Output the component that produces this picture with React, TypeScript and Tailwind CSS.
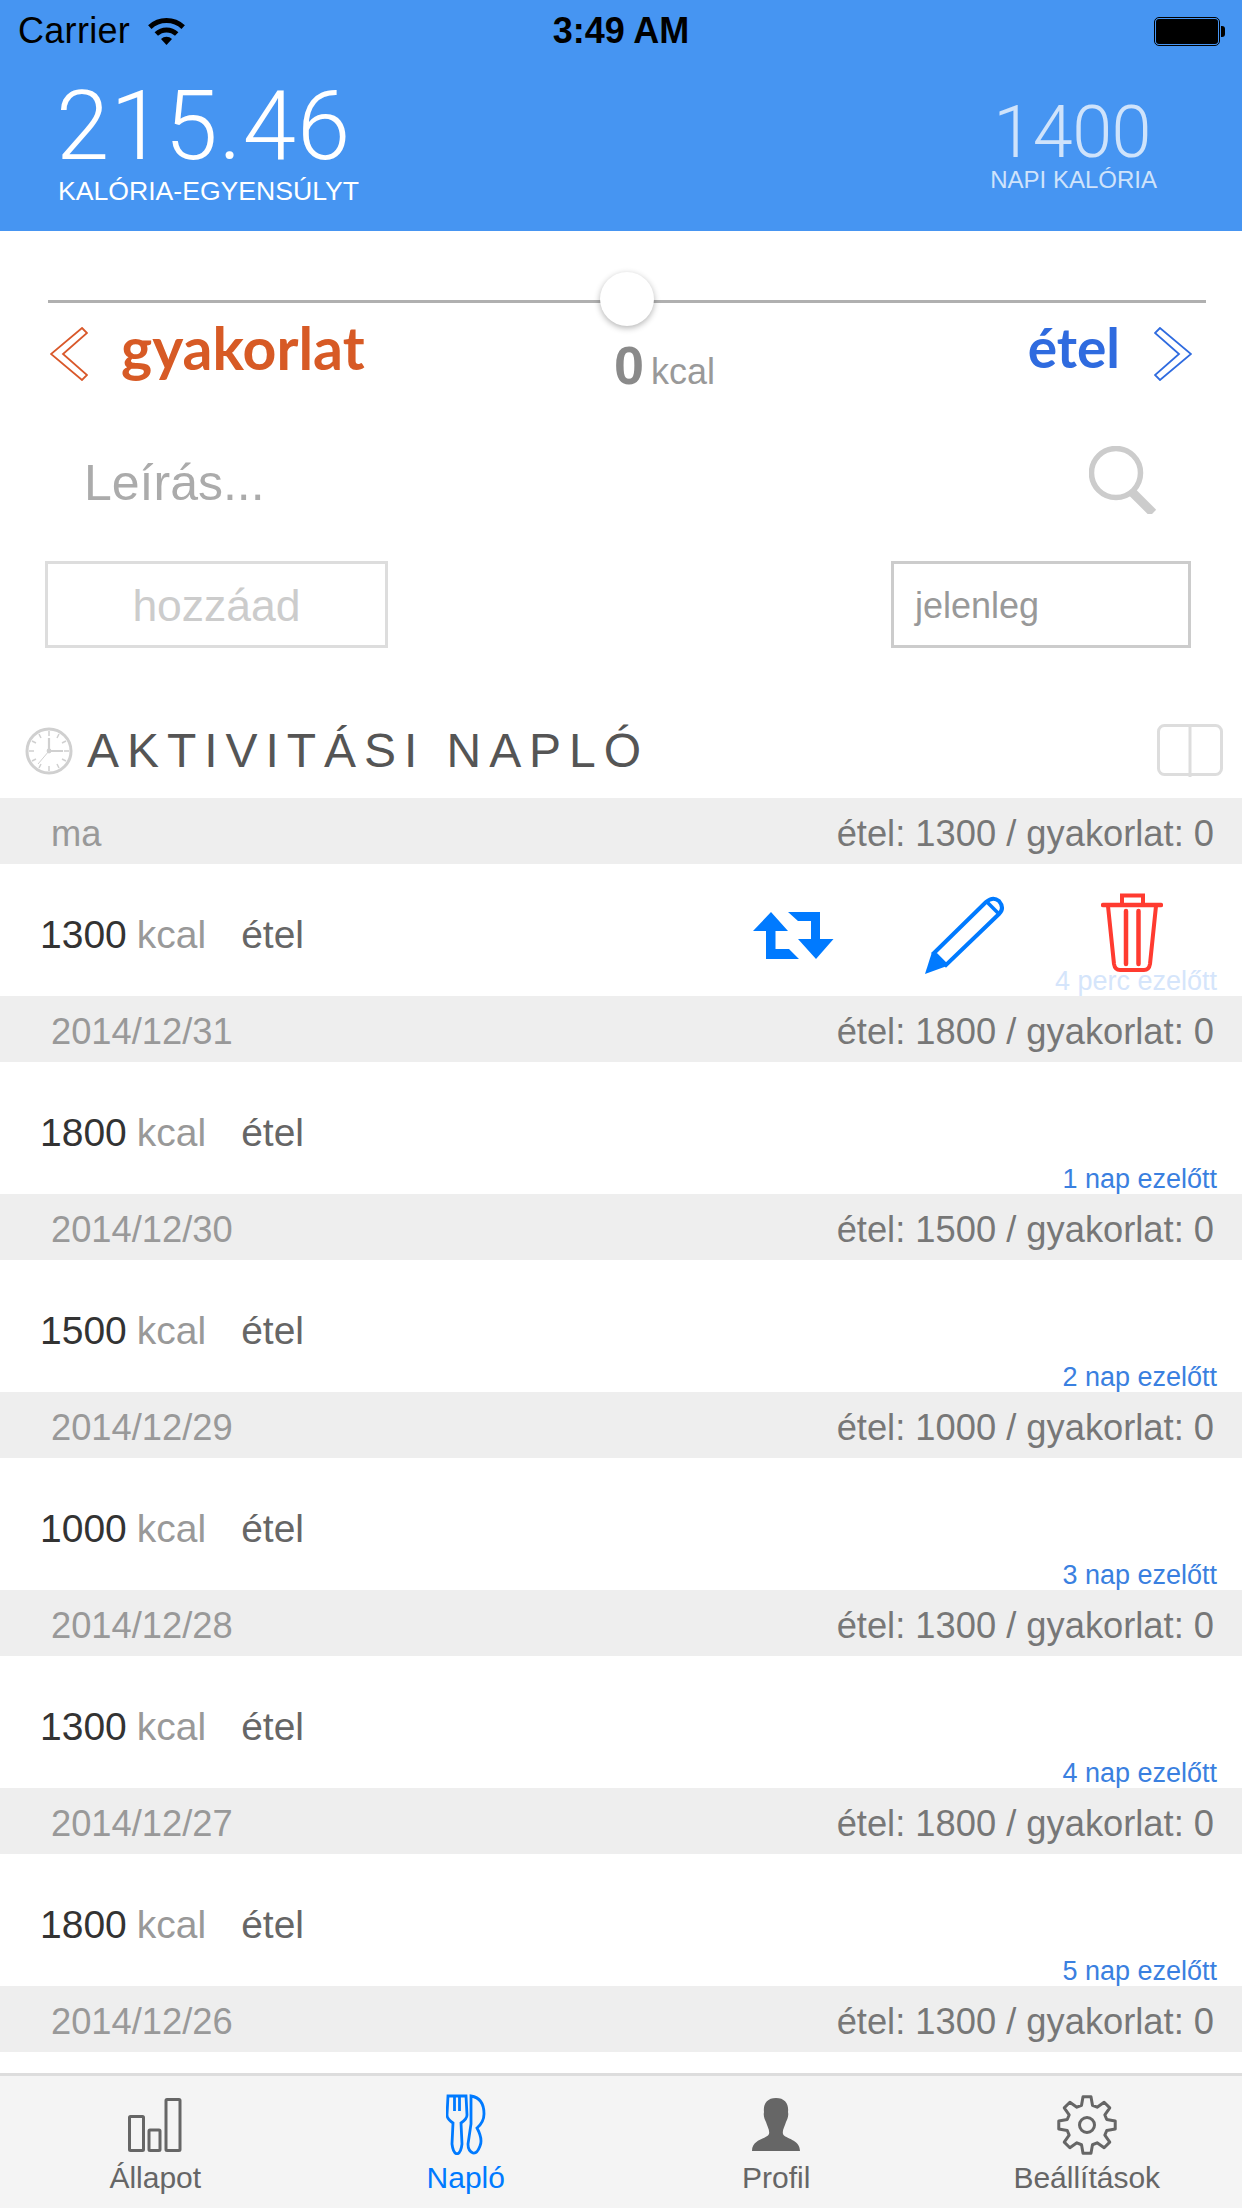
import React from "react";

const days = [
  { d: "ma", v: 1300, t: "4 perc ezelőtt", first: true },
  { d: "2014/12/31", v: 1800, t: "1 nap ezelőtt" },
  { d: "2014/12/30", v: 1500, t: "2 nap ezelőtt" },
  { d: "2014/12/29", v: 1000, t: "3 nap ezelőtt" },
  { d: "2014/12/28", v: 1300, t: "4 nap ezelőtt" },
  { d: "2014/12/27", v: 1800, t: "5 nap ezelőtt" },
];

function gearPath() {
  const c = 30, ro = 28.5, ri = 20.5;
  let p = "";
  for (let i = 0; i < 8; i++) {
    const a = -Math.PI / 2 + (i * Math.PI) / 4;
    const pts: [number, number][] = [
      [ri, a - 0.27],
      [ro, a - 0.14],
      [ro, a + 0.14],
      [ri, a + 0.27],
    ];
    pts.forEach(([r, t], j) => {
      const x = (c + r * Math.cos(t)).toFixed(2);
      const y = (c + r * Math.sin(t)).toFixed(2);
      p += `${i === 0 && j === 0 ? "M" : "L"}${x} ${y} `;
    });
  }
  return p + "Z";
}

function Wifi() {
  return (
    <svg width="37" height="27" viewBox="0 0 37 27" className="ml-[18px]">
      <path d="M1.8 9.1A24.5 24.5 0 0 1 35.2 9.1" fill="none" stroke="#000" strokeWidth="5" />
      <path d="M8.3 16A15 15 0 0 1 28.7 16" fill="none" stroke="#000" strokeWidth="5" />
      <path d="M18.5 27L13 21A8 8 0 0 1 24 21Z" fill="#000" />
    </svg>
  );
}

function Chevron({ color, flip }: { color: string; flip?: boolean }) {
  return (
    <svg width="38" height="54" viewBox="0 0 38 54" className={flip ? "-scale-x-100" : ""}>
      <path d="M32 1L37 6L13 27L37 48L32 53L1 27Z" fill="none" stroke={color} strokeWidth="1.8" />
    </svg>
  );
}

function Search() {
  return (
    <svg width="68" height="68" viewBox="0 0 68 68">
      <circle cx="27" cy="27" r="24.5" fill="none" stroke="#cccccc" strokeWidth="5.5" />
      <path d="M43 46L64 67" fill="none" stroke="#cccccc" strokeWidth="9" />
    </svg>
  );
}

function Clock() {
  return (
    <svg width="48" height="48" viewBox="0 0 48 48" fill="none" stroke="#d0d0d0">
      <circle cx="24" cy="24" r="22" strokeWidth="3" />
      <path d="M24 4V9M24 39V44M4 24H9M39 24H44M14 7L16 11M34 7L32 11M7 14L11 16M41 14L37 16M7 34L11 32M41 34L37 32M14 41L16 37M34 41L32 37" strokeWidth="1.5" />
      <path d="M24 11V24H38" strokeWidth="2.2" />
      <path d="M24 24L13 37" strokeWidth="1" />
      <circle cx="24" cy="24" r="2.4" fill="#d0d0d0" stroke="none" />
    </svg>
  );
}

function Book() {
  return (
    <svg width="66" height="54" viewBox="0 0 66 54" fill="none" stroke="#dddddd" strokeWidth="3">
      <rect x="1.5" y="1.5" width="63" height="49" rx="6" />
      <path d="M33 1V53" />
    </svg>
  );
}

function Repeat() {
  return (
    <svg width="81" height="49" viewBox="0 0 81 49" fill="#007aff">
      <path d="M18 1L35 20H22.5V38H36L46 48H13V20H0Z" />
      <path d="M35 1H67V28H80.5L63 48L45 28H58V10H45Z" />
    </svg>
  );
}

function Pencil() {
  return (
    <svg width="80" height="80" viewBox="0 0 80 80" fill="none" stroke="#007aff" strokeWidth="4">
      <path d="M9 58L61 7Q68 1 74 6Q80 13 74 19L21 70Z" />
      <path d="M62 7L74 19" strokeWidth="3.5" />
      <path d="M0 79L7 57L22 71Z" fill="#007aff" stroke="none" />
    </svg>
  );
}

function Trash() {
  return (
    <svg width="62" height="80" viewBox="0 0 62 80" fill="none" stroke="#ff3b30">
      <path d="M2 12H60" strokeWidth="4.5" strokeLinecap="round" />
      <path d="M21 11V2.5H42V11" strokeWidth="4" />
      <path d="M7 13L13 71Q14 77 19 77H43Q48 77 49 71L55 13" strokeWidth="4" />
      <path d="M25 18V71M37.500 18V71" strokeWidth="4.500" strokeLinecap="round" />
    </svg>
  );
}

function ChartIcon() {
  return (
    <svg width="54" height="54" viewBox="0 0 54 54" fill="none" stroke="#666666" strokeWidth="3">
      <rect x="1.500" y="18.500" width="14" height="34" rx="1" />
      <rect x="21" y="32" width="11" height="20.500" rx="1" />
      <rect x="38" y="1.500" width="14" height="51" rx="1" />
    </svg>
  );
}

function ForkKnife() {
  return (
    <svg width="40" height="61" viewBox="0 0 40 61" fill="none" stroke="#007aff" strokeWidth="2.800">
      <path d="M2 2H20L21 21Q21 25 15 29L16 50Q15 59 11 60Q7 59 6 50L7 29Q1 25 1 21Z" />
      <path d="M8.500 2V17M13.500 2V17" />
      <path d="M25 2Q38 4 38 20Q38 28 31 34Q37 45 34 52Q31 60 27 59Q22 57 22 50L25 30Z" />
    </svg>
  );
}

function Person() {
  return (
    <svg width="48" height="53" viewBox="0 0 48 53" fill="#666666">
      <path d="M24 0C33 0 37 6 36 14C37 18 35 22 34 24C33 28 30 32 31 36C33 41 48 41 48 53H0C0 41 15 41 17 36C18 32 15 28 14 24C13 22 11 18 12 14C11 6 15 0 24 0Z" />
    </svg>
  );
}

function Gear() {
  return (
    <svg width="60" height="60" viewBox="0 0 60 60" fill="none" stroke="#666666" strokeWidth="3" strokeLinejoin="round">
      <path d={gearPath()} />
      <circle cx="30" cy="30" r="7.500" />
    </svg>
  );
}

function Tab({ icon, label, active }: { icon: React.ReactNode; label: string; active?: boolean }) {
  return (
    <div className="flex flex-col items-center">
      <div className="h-[61px] flex items-center justify-center">{icon}</div>
      <div className={`text-[30px] leading-none mt-[8px] ${active ? "text-[#007aff]" : "text-[#666666]"}`}>{label}</div>
    </div>
  );
}

function DayHeader({ d, v }: { d: string; v: number }) {
  return (
    <div className="h-[66px] bg-[#eeeeee] flex items-center justify-between pl-[51px] pr-[28px] text-[36.3px] leading-none pt-[7px]">
      <span className="text-[#999999]">{d}</span>
      <span className="text-[#777777]">étel: {v} / gyakorlat: 0</span>
    </div>
  );
}

export default function App() {
  return (
    <div className="w-[1242px] h-[2208px] bg-white overflow-hidden flex flex-col font-['Liberation_Sans',sans-serif]">
      <header className="h-[231px] shrink-0 bg-[#4695f2] flex flex-col">
        <div className="h-[62px] grid grid-cols-3 items-center px-[18px] text-black text-[36px] leading-none">
          <div className="flex items-center">
            <span className="tracking-[0.3px]">Carrier</span>
            <Wifi />
          </div>
          <div className="text-center font-bold">3:49 AM</div>
          <div className="flex justify-end items-center">
            <div className="w-[66px] h-[29px] rounded-[5px] border border-black p-[1px]">
              <div className="w-full h-full rounded-[3px] bg-black" />
            </div>
            <div className="w-[4px] h-[11px] bg-black rounded-r-[3px] ml-[1px] mr-[-1px]" />
          </div>
        </div>
        <div className="flex justify-between items-start">
          <div className="pl-[56px] text-white">
            <div className="font-['Roboto',sans-serif] font-light text-[96px] leading-[80px] mt-[24px] tracking-[1px]">215.46</div>
            <div className="text-[26.6px] leading-none mt-[12px] pl-[2px]">KALÓRIA-EGYENSÚLYT</div>
          </div>
          <div className="pr-[85px] text-[#cfe3fb] flex flex-col items-center">
            <div className="font-['Roboto',sans-serif] font-light text-[72px] leading-[58px] mt-[42px] tracking-[-0.5px] mr-[3px]">1400</div>
            <div className="text-[24px] leading-none mt-[6px]">NAPI KALÓRIA</div>
          </div>
        </div>
      </header>

      <section className="shrink-0 h-[567px] flex flex-col">
        <div className="ml-[48px] mr-[36px] mt-[69px] h-[3px] bg-[#b0b0b0] relative">
          <div className="absolute left-[552px] top-[-28px] w-[54px] h-[54px] rounded-full bg-white shadow-[0_2px_6px_rgba(0,0,0,0.3)]" />
        </div>
        <div className="h-[65px] mt-[19px] flex items-start pl-[50px] pr-[50px]">
          <div className="w-[564px] flex items-start">
            <div className="mt-[5px]"><Chevron color="#d9582a" /></div>
            <span className="ml-[33px] font-['Lato',sans-serif] font-bold text-[#d75a25] text-[59px] leading-[60px] mt-[-4px]">gyakorlat</span>
          </div>
          <div className="flex items-baseline text-[#8a8a8a] mt-[16px]">
            <span className="font-bold text-[54px] leading-[54px]">0</span>
            <span className="text-[36px] ml-[7px] text-[#999999] leading-none">kcal</span>
          </div>
          <div className="ml-auto flex items-start">
            <span className="font-['Lato',sans-serif] font-bold text-[#2f6bdf] text-[55px] leading-[60px] mt-[-5px]">étel</span>
            <div className="ml-[34px] mt-[5px]"><Chevron color="#2f6bdf" flip /></div>
          </div>
        </div>
        <div className="h-[68px] mt-[59px] flex items-center pl-[84px] pr-[85px] justify-between">
          <span className="text-[50px] text-[#ababab] leading-none mt-[6px]">Leírás...</span>
          <Search />
        </div>
        <div className="h-[87px] mt-[47px] flex justify-between pl-[45px] pr-[51px]">
          <div className="w-[343px] border-[3px] border-[#dddddd] flex items-center justify-center text-[44.5px] text-[#cccccc] pt-[3px]">hozzáad</div>
          <div className="w-[300px] border-[3px] border-[#cccccc] flex items-center pl-[21px] text-[36px] text-[#999999] pt-[2px]">jelenleg</div>
        </div>
        <div className="h-[54px] mt-[76px] flex items-center pl-[25px] pr-[19px]">
          <Clock />
          <span className="ml-[14px] text-[48px] tracking-[7.95px] text-[#555555] leading-none">AKTIVITÁSI NAPLÓ</span>
          <div className="ml-auto"><Book /></div>
        </div>
      </section>

      <section className="flex-1 flex flex-col">
        {days.map((r) => (
          <div key={r.d}>
            <DayHeader d={r.d} v={r.v} />
            <div className="h-[132px] relative flex items-center pl-[40px] text-[39px] leading-none">
              <span className="text-[#333333] mt-[9px]">{r.v}</span>
              <span className="text-[#999999] ml-[10px] mt-[9px]">kcal</span>
              <span className="text-[#666666] ml-[35px] mt-[9px]">étel</span>
              {r.first && (
                <div className="ml-auto mr-[79px] mt-[10px] flex items-center">
                  <Repeat />
                  <div className="ml-[91px]"><Pencil /></div>
                  <div className="ml-[96px] mt-[-5px]"><Trash /></div>
                </div>
              )}
              <span className={`absolute right-[25px] bottom-0 text-[27px] leading-[30px] ${r.first ? "text-[#d5e5fb]" : "text-[#3a80e0]"}`}>{r.t}</span>
            </div>
          </div>
        ))}
        <DayHeader d="2014/12/26" v={1300} />
      </section>

      <nav className="h-[135px] shrink-0 bg-[#f4f4f4] border-t-[3px] border-[#dddddd] grid grid-cols-4 pt-[18px]">
        <Tab icon={<ChartIcon />} label="Állapot" />
        <Tab icon={<ForkKnife />} label="Napló" active />
        <Tab icon={<Person />} label="Profil" />
        <Tab icon={<Gear />} label="Beállítások" />
      </nav>
    </div>
  );
}
